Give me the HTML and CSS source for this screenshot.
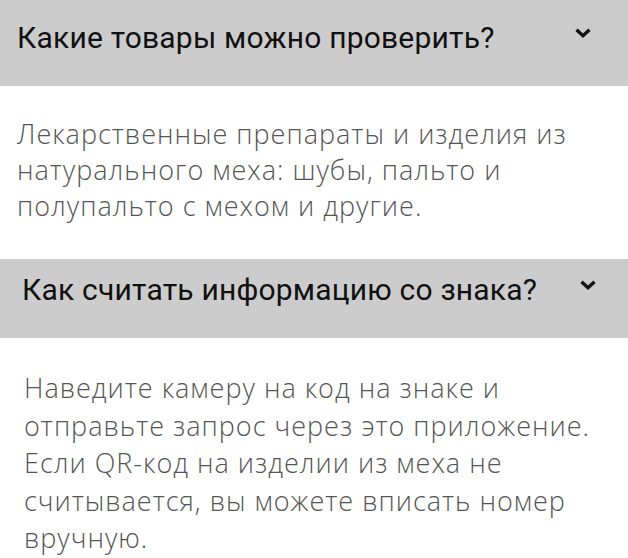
FILE: index.html
```html
<!DOCTYPE html>
<html lang="ru">
<head>
    <meta charset="UTF-8">
    <meta name="viewport" content="width=device-width, initial-scale=1.0">
    <title>Вопросы и ответы</title>
    <link rel="stylesheet" href="styles.css">
</head>
<body>
    <div class="faq">
        <div class="faq-item faq-item-first">
            <div class="faq-question">
                <span class="faq-title">Какие товары можно проверить?</span>
                <svg class="faq-chevron" width="16" height="11" viewBox="0 0 16 11">
                    <polyline points="1.5,1.8 8,7.8 14.5,1.8" />
                </svg>
            </div>
            <div class="faq-answer">
                <p>Лекарственные препараты и изделия из натурального меха: шубы, пальто и полупальто с мехом и другие.</p>
            </div>
        </div>

        <div class="faq-item faq-item-second">
            <div class="faq-question">
                <span class="faq-title">Как считать информацию со знака?</span>
                <svg class="faq-chevron" width="16" height="11" viewBox="0 0 16 11">
                    <polyline points="1.5,1.8 8,7.8 14.5,1.8" />
                </svg>
            </div>
            <div class="faq-answer">
                <p>Наведите камеру на код на знаке и отправьте запрос через это приложение. Если QR-код на изделии из меха не считывается, вы можете вписать номер вручную.</p>
            </div>
        </div>
    </div>
</body>
</html>
```

FILE: styles.css
```css
body {
    margin: 0;
    padding: 0;
    background-color: #ffffff;
    overflow: hidden;
}

.faq {
    width: 628px;
}

.faq-question {
    display: flex;
    justify-content: space-between;
    align-items: flex-start;
    background-color: #cccccc;
    padding-bottom: 31px;
}

.faq-title {
    font-family: Roboto, "Noto Sans", sans-serif;
    font-size: 30px;
    letter-spacing: 0.2px;
    line-height: 35px;
    color: #111;
}

.faq-chevron {
    display: block;
    margin-top: 8px;
}

.faq-chevron polyline {
    fill: none;
    stroke: #111;
    stroke-width: 3.4;
}

.faq-answer p {
    margin: 0;
    font-family: "Open Sans", "Liberation Sans", sans-serif;
    font-weight: 300;
    font-size: 27px;
    letter-spacing: 1px;
    color: #555;
}

/* first block sits a bit lower and further left */
.faq-item-first .faq-question {
    padding-top: 20px;
    padding-left: 17px;
    padding-right: 37px;
}

.faq-item-first .faq-answer {
    padding: 30px 38px 35px 17px;
    line-height: 36px;
}

.faq-item-second .faq-question {
    padding-top: 13px;
    padding-left: 22px;
    padding-right: 32px;
}

.faq-item-second .faq-answer {
    padding: 31px 24px 0 24px;
    line-height: 37.5px;
}
```
